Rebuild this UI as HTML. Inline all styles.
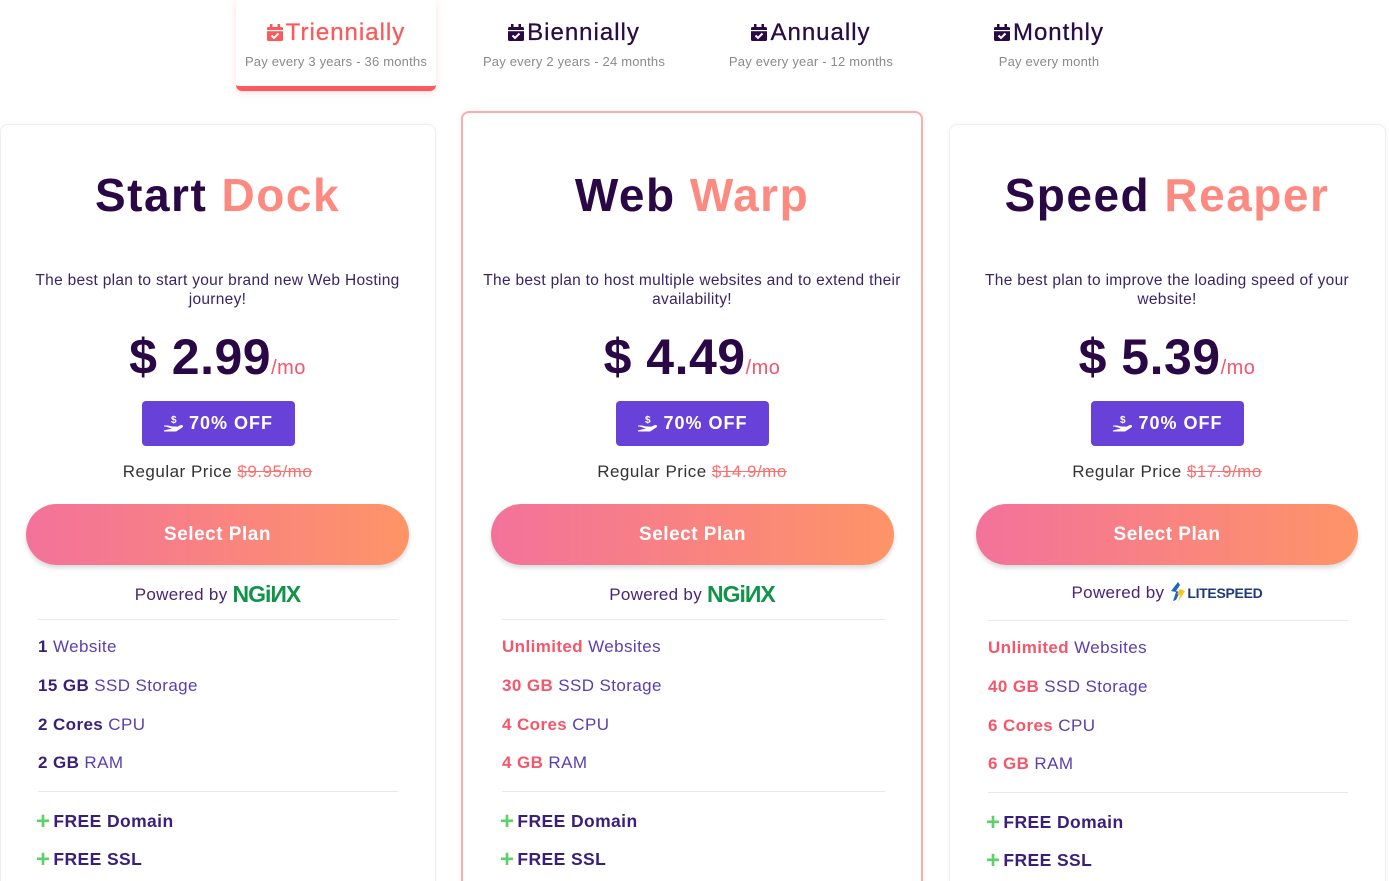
<!DOCTYPE html>
<html><head><meta charset="utf-8"><style>
*{margin:0;padding:0;box-sizing:border-box}
html,body{width:1389px;height:881px;overflow:hidden}
body{background:#fff;font-family:"Liberation Sans",sans-serif;position:relative}
.a{position:absolute}
.tab{position:absolute;top:0;width:200px;height:91px;text-align:center}
.tab .t{position:absolute;top:19px;left:0;right:0;font-size:24px;color:#2a0a45;letter-spacing:1px;-webkit-text-stroke:.3px currentColor}
.tab .s{position:absolute;top:54px;left:0;right:0;font-size:13px;color:#8a8a8a;letter-spacing:.2px}
.ic{display:inline-block;width:16px;height:17px;vertical-align:-1px;margin-right:3px}
.card{position:absolute;background:#fff;border:1px solid #eee;border-radius:8px;box-shadow:0 0 8px rgba(0,0,0,.04)}
.col{position:absolute;top:0;height:881px}
.col>*{position:absolute;left:0;right:0;text-align:center}
.ttl{top:168px;font-size:46px;font-weight:bold;color:#2a0845;letter-spacing:1.5px}
.ttl span{color:#fd8a80}
.desc{top:271px;font-size:15.5px;line-height:19px;color:#3a2463;padding:0 22px;letter-spacing:.3px}
.price{top:328px;font-size:50px;font-weight:bold;color:#2a0845;letter-spacing:.5px}
.price span{font-size:20px;font-weight:normal;color:#f4566a}
.badge{top:401px;left:50%!important;width:153px;margin-left:-76px;height:45px;background:#6841d8;border-radius:4px;color:#fff;font-weight:bold;font-size:18px;line-height:45px;letter-spacing:1px}
.badge svg{vertical-align:-3px;margin-right:4px}
.reg{top:462px;font-size:17px;color:#333;letter-spacing:.5px}
.reg s{color:#fc6f6f}
.btn{top:504px;height:61px;border-radius:31px;background:linear-gradient(90deg,#f3729b,#fe9467);color:#fff;font-weight:bold;font-size:19px;line-height:61px;letter-spacing:.5px;box-shadow:0 3px 5px rgba(0,0,0,.15)}
.pw{top:581px;font-size:17px;color:#4a2477;letter-spacing:.3px}
.ngx{color:#109448;font-weight:bold;font-size:23px;letter-spacing:-1px;vertical-align:-2px}
.hr{height:1px;background:#e9e6f3}
.f{text-align:left!important;font-size:17px;color:#5b3eb0;letter-spacing:.4px}
.f b{color:#3a1f7a}
.r .f b{color:#f4566a}
.fr{font-weight:bold;color:#3a1f7a!important;font-size:17.5px}
.fr i{font-style:normal;color:#5fcf6a;font-size:24px;font-weight:bold;margin-right:3px;vertical-align:-2px}
</style></head><body>

<div class="a" style="left:236px;top:0;width:200px;height:91px;background:#fff;border-radius:0 0 6px 6px;box-shadow:0 2px 8px rgba(253,100,100,.2);border-bottom:5px solid #fc5a5a"></div>
<div class="tab" style="left:236px"><div class="t" style="color:#fc5a5a"><svg class="ic" viewBox="0 0 16 17"><rect x="0" y="3" width="16" height="14" rx="1.5" fill="#fc5a5a"/><rect x="3" y="0" width="2.5" height="5" fill="#fc5a5a"/><rect x="10.5" y="0" width="2.5" height="5" fill="#fc5a5a"/><rect x="0" y="6" width="16" height="1.2" fill="#fff"/><path d="M4.5 11.5l2.5 2.5 4.5-4.5" stroke="#fff" stroke-width="2" fill="none"/></svg>Triennially</div><div class="s">Pay every 3 years - 36 months</div></div>
<div class="tab" style="left:474px"><div class="t"><svg class="ic" viewBox="0 0 16 17"><rect x="0" y="3" width="16" height="14" rx="1.5" fill="#2a0a45"/><rect x="3" y="0" width="2.5" height="5" fill="#2a0a45"/><rect x="10.5" y="0" width="2.5" height="5" fill="#2a0a45"/><rect x="0" y="6" width="16" height="1.2" fill="#fff"/><path d="M4.5 11.5l2.5 2.5 4.5-4.5" stroke="#fff" stroke-width="2" fill="none"/></svg>Biennially</div><div class="s">Pay every 2 years - 24 months</div></div>
<div class="tab" style="left:711px"><div class="t"><svg class="ic" viewBox="0 0 16 17"><rect x="0" y="3" width="16" height="14" rx="1.5" fill="#2a0a45"/><rect x="3" y="0" width="2.5" height="5" fill="#2a0a45"/><rect x="10.5" y="0" width="2.5" height="5" fill="#2a0a45"/><rect x="0" y="6" width="16" height="1.2" fill="#fff"/><path d="M4.5 11.5l2.5 2.5 4.5-4.5" stroke="#fff" stroke-width="2" fill="none"/></svg>Annually</div><div class="s">Pay every year - 12 months</div></div>
<div class="tab" style="left:949px"><div class="t"><svg class="ic" viewBox="0 0 16 17"><rect x="0" y="3" width="16" height="14" rx="1.5" fill="#2a0a45"/><rect x="3" y="0" width="2.5" height="5" fill="#2a0a45"/><rect x="10.5" y="0" width="2.5" height="5" fill="#2a0a45"/><rect x="0" y="6" width="16" height="1.2" fill="#fff"/><path d="M4.5 11.5l2.5 2.5 4.5-4.5" stroke="#fff" stroke-width="2" fill="none"/></svg>Monthly</div><div class="s">Pay every month</div></div>

<div class="card" style="left:0;top:124px;width:436px;height:770px"></div>
<div class="card" style="left:461px;top:111px;width:462px;height:785px;border:2px solid #fdaeaa"></div>
<div class="card" style="left:949px;top:124px;width:437px;height:770px"></div>

<!-- col 1 -->
<div class="col" style="left:0;width:435px">
<div class="ttl">Start <span>Dock</span></div>
<div class="desc">The best plan to start your brand new Web Hosting journey!</div>
<div class="price">$ 2.99<span>/mo</span></div>
<div class="badge"><svg width="22" height="18" viewBox="0 0 22 18"><text x="8" y="9" font-size="10" font-weight="bold" fill="#fff" font-family="Liberation Sans">$</text><path d="M1 12h4l4 1h4c1 0 1 1.5 0 1.5H9M13 14l5-2.5c1.5-.5 2 1 1 1.5l-6 4H1z" fill="#fff" stroke="#fff" stroke-width="1"/></svg>70% OFF</div>
<div class="reg">Regular Price <s>$9.95/mo</s></div>
<div class="btn" style="left:26px;right:26px">Select Plan</div>
<div class="pw">Powered by <span class="ngx">NGiИX</span></div>
<div class="hr" style="top:619px;left:38px;right:37px"></div>
<div class="f" style="top:637px;left:38px"><b>1</b> Website</div>
<div class="f" style="top:676px;left:38px"><b>15 GB</b> SSD Storage</div>
<div class="f" style="top:715px;left:38px"><b>2 Cores</b> CPU</div>
<div class="f" style="top:753px;left:38px"><b>2 GB</b> RAM</div>
<div class="hr" style="top:791px;left:38px;right:37px"></div>
<div class="f fr" style="top:808px;left:36px"><i>+</i>FREE Domain</div>
<div class="f fr" style="top:846px;left:36px"><i>+</i>FREE SSL</div>
</div>

<!-- col 2 -->
<div class="col r" style="left:461px;width:462px">
<div class="ttl">Web <span>Warp</span></div>
<div class="desc">The best plan to host multiple websites and to extend their availability!</div>
<div class="price">$ 4.49<span>/mo</span></div>
<div class="badge"><svg width="22" height="18" viewBox="0 0 22 18"><text x="8" y="9" font-size="10" font-weight="bold" fill="#fff" font-family="Liberation Sans">$</text><path d="M1 12h4l4 1h4c1 0 1 1.5 0 1.5H9M13 14l5-2.5c1.5-.5 2 1 1 1.5l-6 4H1z" fill="#fff" stroke="#fff" stroke-width="1"/></svg>70% OFF</div>
<div class="reg">Regular Price <s>$14.9/mo</s></div>
<div class="btn" style="left:30px;right:29px">Select Plan</div>
<div class="pw">Powered by <span class="ngx">NGiИX</span></div>
<div class="hr" style="top:619px;left:41px;right:38px"></div>
<div class="f" style="top:637px;left:41px"><b>Unlimited</b> Websites</div>
<div class="f" style="top:676px;left:41px"><b>30 GB</b> SSD Storage</div>
<div class="f" style="top:715px;left:41px"><b>4 Cores</b> CPU</div>
<div class="f" style="top:753px;left:41px"><b>4 GB</b> RAM</div>
<div class="hr" style="top:791px;left:41px;right:38px"></div>
<div class="f fr" style="top:808px;left:39px"><i>+</i>FREE Domain</div>
<div class="f fr" style="top:846px;left:39px"><i>+</i>FREE SSL</div>
</div>

<!-- col 3 -->
<div class="col r" style="left:949px;width:436px">
<div class="ttl">Speed <span>Reaper</span></div>
<div class="desc">The best plan to improve the loading speed of your website!</div>
<div class="price">$ 5.39<span>/mo</span></div>
<div class="badge"><svg width="22" height="18" viewBox="0 0 22 18"><text x="8" y="9" font-size="10" font-weight="bold" fill="#fff" font-family="Liberation Sans">$</text><path d="M1 12h4l4 1h4c1 0 1 1.5 0 1.5H9M13 14l5-2.5c1.5-.5 2 1 1 1.5l-6 4H1z" fill="#fff" stroke="#fff" stroke-width="1"/></svg>70% OFF</div>
<div class="reg">Regular Price <s>$17.9/mo</s></div>
<div class="btn" style="left:27px;right:27px">Select Plan</div>
<div class="pw">Powered by <svg width="18" height="22" viewBox="0 0 18 22" style="vertical-align:-5px"><path d="M9 1L2 10l5 1-3 9 3-1 4-8-4-1 4-6z" fill="#1f64c8"/><path d="M11 8l5 2-7 11 2-7-3-1z" fill="#f5c518"/></svg><span style="font-weight:bold;font-size:14px;color:#1d3a7a;letter-spacing:-.3px">LITESPEED</span></div>
<div class="hr" style="top:620px;left:39px;right:37px"></div>
<div class="f" style="top:638px;left:39px"><b>Unlimited</b> Websites</div>
<div class="f" style="top:677px;left:39px"><b>40 GB</b> SSD Storage</div>
<div class="f" style="top:716px;left:39px"><b>6 Cores</b> CPU</div>
<div class="f" style="top:754px;left:39px"><b>6 GB</b> RAM</div>
<div class="hr" style="top:792px;left:39px;right:37px"></div>
<div class="f fr" style="top:809px;left:37px"><i>+</i>FREE Domain</div>
<div class="f fr" style="top:847px;left:37px"><i>+</i>FREE SSL</div>
</div>
</body></html>
